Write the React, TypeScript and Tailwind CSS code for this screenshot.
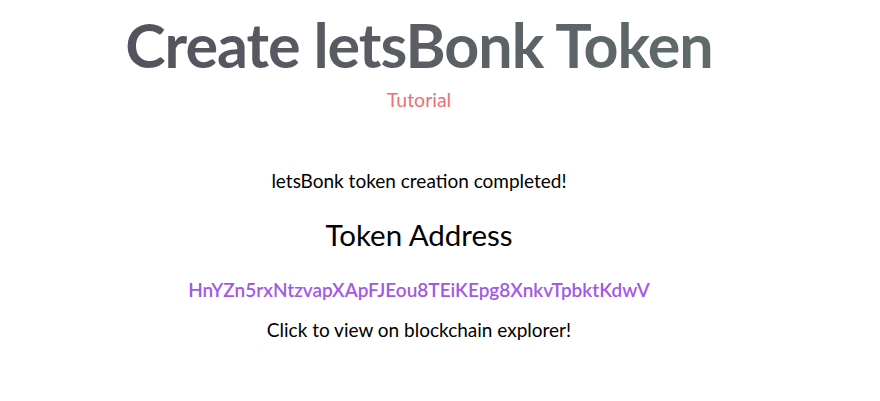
export default function App() {
  const address = "HnYZn5rxNtzvapXApFJEou8TEiKEpg8XnkvTpbktKdwV";

  return (
    <div className="min-h-[401px] bg-white font-['Lato','Noto_Sans',sans-serif]">
      <div className="flex w-[838px] flex-col items-center pt-[6px]">
        <h1 className="bg-gradient-to-r from-[#55525e] to-[#5f6b6a] bg-clip-text text-[61px] font-bold leading-[78px] tracking-[-1px] text-transparent">
          Create letsBonk Token
        </h1>
        <a className="mt-[4px] text-[19.5px] leading-[24px] text-[#e57373]">Tutorial</a>

        <p className="mt-[57px] text-[19px] leading-[24px] text-black">
          letsBonk token creation completed!
        </p>
        <h2 className="mt-[24px] text-[29.5px] leading-[36px] text-black">Token Address</h2>
        <a className="mt-[25px] text-[19px] font-semibold leading-[24px] text-[#a259e6]">
          {address}
        </a>
        <p className="mt-[16px] text-[19px] leading-[24px] text-black">
          Click to view on blockchain explorer!
        </p>
      </div>
    </div>
  );
}
